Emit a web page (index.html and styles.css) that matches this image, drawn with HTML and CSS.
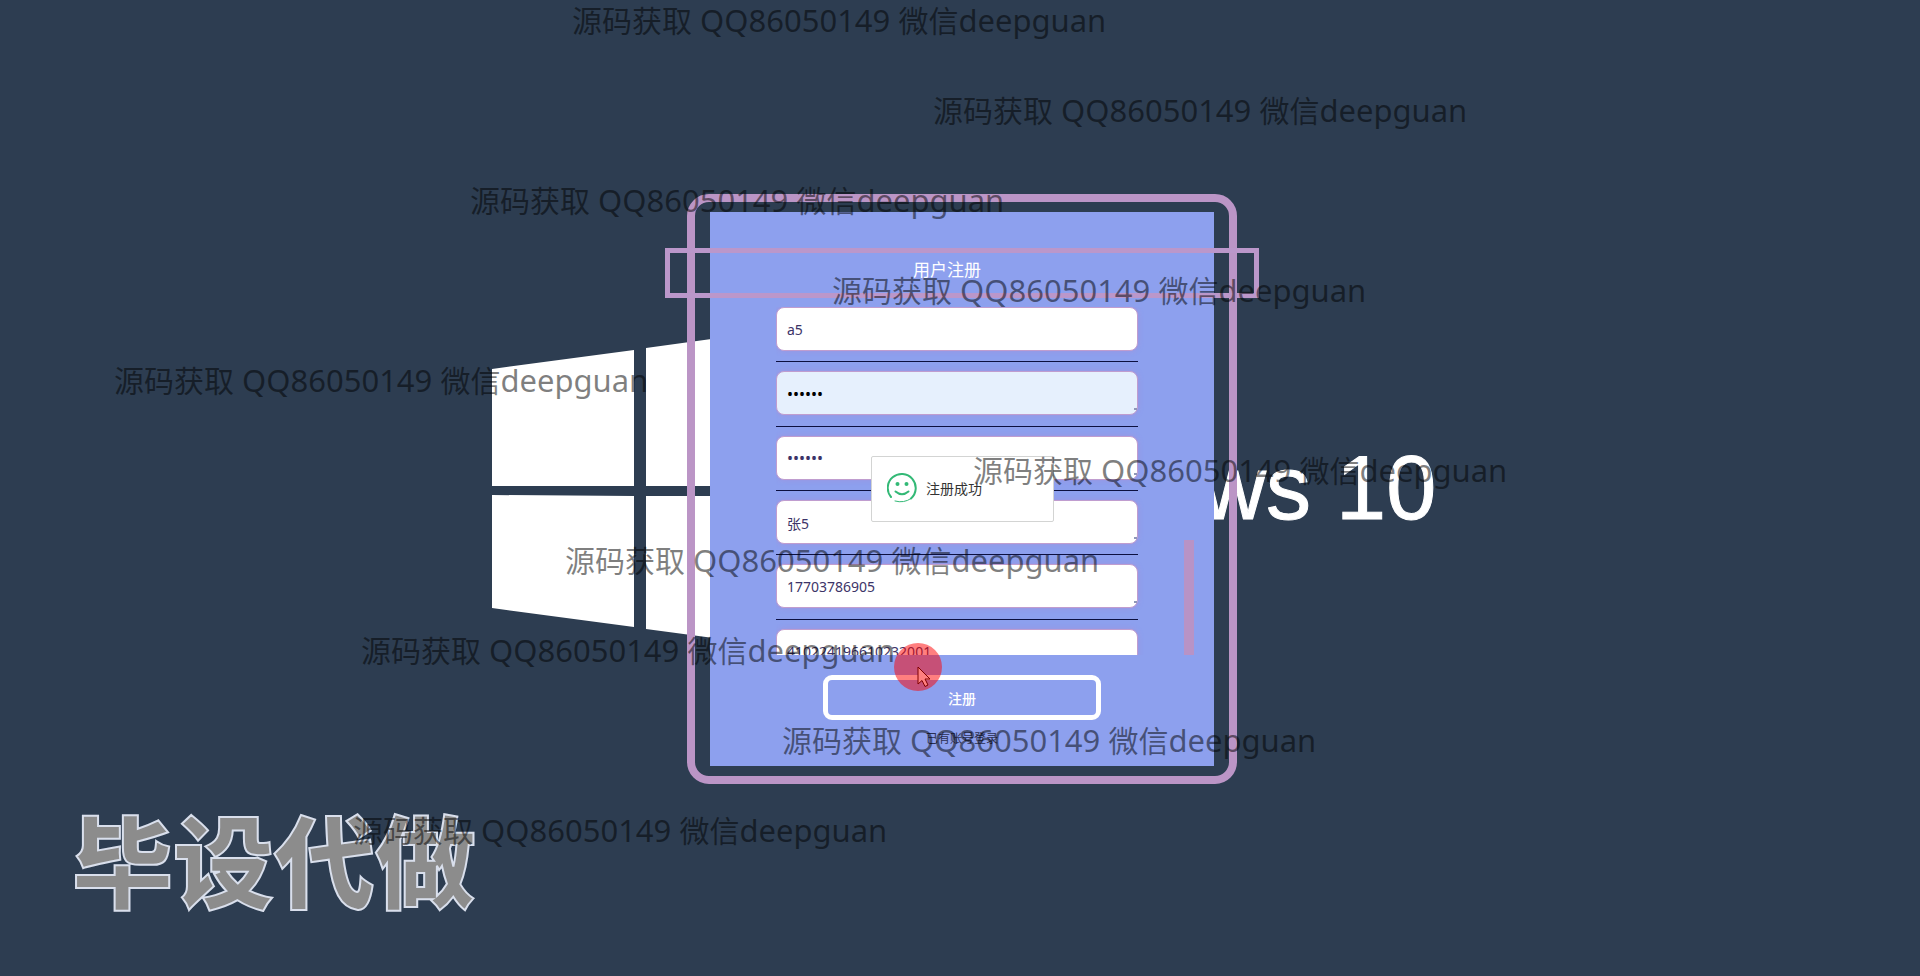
FILE: index.html
```html
<!DOCTYPE html>
<html lang="zh-CN">
<head>
<meta charset="utf-8">
<title>用户注册</title>
<link rel="stylesheet" href="styles.css">
</head>
<body>
<div class="backdrop" aria-hidden="true">
  <svg class="logo" viewBox="0 0 320 326" width="320" height="326">
    <path fill="#fff" d="M0 44 142 25V161H0ZM154 23 320 0V161H154ZM0 170 142 171V302L0 283ZM154 171H320V326L154 304Z"/>
  </svg>
  <span class="wordmark">Windows 10</span>
</div>

<main class="stage">
  <form class="frame">
    <div class="panel">
      <h1 class="title">用户注册</h1>
      <div class="scroll">
        <div class="fields">
          <label class="field"><input class="input" type="text" aria-label="账号" value="a5"></label>
          <label class="field grip"><input class="input filled" type="password" aria-label="密码" value="123456"></label>
          <label class="field grip"><input class="input" type="password" aria-label="确认密码" value="123456"></label>
          <label class="field grip"><input class="input" type="text" aria-label="姓名" value="张5"></label>
          <label class="field grip"><input class="input" type="text" aria-label="手机号" value="17703786905"></label>
          <label class="field"><input class="input" type="text" aria-label="身份证" value="410224196610232001"></label>
        </div>
        <div class="thumb"></div>
      </div>
      <button class="submit" type="button">注册</button>
      <a class="login" href="#">已有账号登录</a>
    </div>
  </form>
</main>

<div class="toast" role="status">
  <svg class="smile" viewBox="0 0 30 30" width="30" height="30" fill="none" stroke="#33b976" stroke-linecap="round">
    <path stroke-width="2" d="M4 24A14 14 0 1 1 24 25.500"/>
    <path stroke-width="1" d="M24 25.500Q17 30.500 8 28"/>
    <path stroke-width="2" d="M8.500 18.500Q15 24 21.500 18.500"/>
    <g fill="#33b976" stroke="none"><circle cx="10.500" cy="11" r="2"/><circle cx="19.500" cy="11" r="2"/></g>
  </svg>
  <span>注册成功</span>
</div>

<svg class="pointer" viewBox="0 0 48 48" width="48" height="48">
  <path d="M24 24V41L28 37.500 31 43.500 34 42 31 36H36Z" fill="#fff" stroke="#000"/>
  <circle cx="24" cy="24" r="24" fill="#f00" fill-opacity=".5"/>
</svg>

<div class="brand">毕设代做</div>

<div class="marks">
  <span class="mark m1">源码获取<span class="latin"> QQ86050149 </span>微信<span class="latin">deepguan</span></span>
  <span class="mark m2">源码获取<span class="latin"> QQ86050149 </span>微信<span class="latin">deepguan</span></span>
  <span class="mark m3">源码获取<span class="latin"> QQ86050149 </span>微信<span class="latin">deepguan</span></span>
  <span class="mark m4">源码获取<span class="latin"> QQ86050149 </span>微信<span class="latin">deepguan</span></span>
  <span class="mark m5">源码获取<span class="latin"> QQ86050149 </span>微信<span class="latin">deepguan</span></span>
  <span class="mark m6">源码获取<span class="latin"> QQ86050149 </span>微信<span class="latin">deepguan</span></span>
  <span class="mark m7">源码获取<span class="latin"> QQ86050149 </span>微信<span class="latin">deepguan</span></span>
  <span class="mark m8">源码获取<span class="latin"> QQ86050149 </span>微信<span class="latin">deepguan</span></span>
  <span class="mark m9">源码获取<span class="latin"> QQ86050149 </span>微信<span class="latin">deepguan</span></span>
  <span class="mark m10">源码获取<span class="latin"> QQ86050149 </span>微信<span class="latin">deepguan</span></span>
</div>
</body>
</html>
```
FILE: styles.css
```css
* { box-sizing: border-box; }

body {
  position: relative;
  margin: 0;
  min-height: 100vh;
  overflow: hidden;
  background: #2d3d51;
  font-family: "Noto Sans", "Noto Sans CJK SC", sans-serif;
  font-size: 14px;
}

.backdrop {
  position: absolute;
  inset: 0;
  color: #fff;
}
.logo { position: absolute; left: 492px; top: 325px; }
.wordmark {
  position: absolute;
  left: 946px;
  top: 438px;
  font: 90px/100px "Liberation Sans", sans-serif;
  -webkit-text-stroke: 1px #fff;
  white-space: nowrap;
}

.stage {
  position: relative;
  display: flex;
  justify-content: center;
  padding-top: 194px;
  padding-left: 4px;
}
.frame {
  width: 550px;
  padding: 10px 15px;
  border: 8px solid #bb95c6;
  border-radius: 22px;
}
.panel {
  display: flex;
  flex-direction: column;
  align-items: center;
  height: 554px;
  padding-top: 36px;
  background: #8da0ee;
}
.title {
  flex: none;
  width: 594px;
  height: 50px;
  margin: 0 0 9px;
  padding-right: 30px;
  border: 5px solid #bb97ca;
  color: #fff;
  font-size: 17px;
  font-weight: 400;
  line-height: 34px;
  text-align: center;
}

.scroll {
  display: flex;
  align-items: flex-end;
  justify-content: space-between;
  align-self: stretch;
  height: 348px;
  margin: 0 20px 20px 66px;
  overflow: hidden;
}
.fields {
  display: grid;
  grid-template-rows: repeat(6, 1fr);
  align-self: flex-start;
  width: 362px;
  height: 386px;
}
.field {
  position: relative;
  display: block;
  margin-bottom: 9px;
  border-bottom: 1px solid #0c1040;
}
.grip::after {
  content: "";
  position: absolute;
  right: 1px;
  top: 37px;
  width: 3px;
  height: 2px;
  background: #8f97b8;
}
.input {
  display: block;
  width: 100%;
  height: 44px;
  padding: 1px 10px 0;
  border: 1px solid #c09dcf;
  border-radius: 8px;
  background: #fff;
  box-shadow: 0 0 5px rgba(170, 140, 215, .6);
  color: #3c3468;
  font: inherit;
}
.input[type="password"] { font-size: 16px; }
.filled { background: #e6f0fd; color: #000; }
.thumb { width: 10px; height: 115px; background: #b893c6; }

.submit {
  width: 278px;
  height: 45px;
  padding: 0;
  border: 5px solid #fff;
  border-radius: 9px;
  background: #8da0ee;
  color: #fff;
  font: inherit;
  font-weight: 500;
}
.login {
  margin-top: 10px;
  color: #2b2f52;
  font-size: 12px;
  line-height: 18px;
  text-decoration: none;
}

.toast {
  position: absolute;
  left: 871px;
  top: 456px;
  display: flex;
  align-items: center;
  gap: 9px;
  width: 183px;
  height: 66px;
  padding: 0 0 2px 15px;
  border: 1px solid #d3d4d3;
  border-radius: 2px;
  background: #fff;
  color: #333;
}
.pointer { position: absolute; left: 894px; top: 643px; }

.brand {
  position: absolute;
  left: 72px;
  top: 797px;
  color: #8c8c8c;
  font: 900 101px/120px "Noto Sans CJK SC", sans-serif;
  -webkit-text-stroke: 2px #d9dfec;
}

.marks {
  position: absolute;
  inset: 0;
  display: grid;
  grid-auto-rows: 90px;
  color: rgba(0, 0, 0, .5);
  font-size: 30px;
  line-height: 40px;
  white-space: nowrap;
  pointer-events: none;
}
.latin { font-size: 31px; }
.m1 { margin-left: 572px; }
.m2 { margin-left: 933px; }
.m3 { margin-left: 470px; }
.m4 { margin-left: 832px; }
.m5 { margin-left: 114px; }
.m6 { margin-left: 973px; }
.m7 { margin-left: 565px; }
.m8 { margin-left: 361px; }
.m9 { margin-left: 782px; }
.m10 { margin-left: 353px; }
```
